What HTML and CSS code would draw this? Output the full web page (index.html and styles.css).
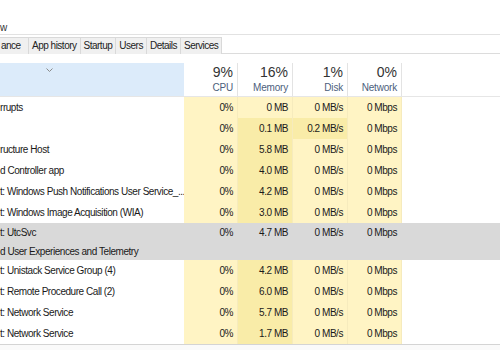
FILE: index.html
```html
<!DOCTYPE html>
<html lang="en">

<head>
    <meta charset="UTF-8">
    <title>Task Manager</title>
    <link rel="stylesheet" href="styles.css">
</head>

<body>
    <div class="window">
        <!-- Menu bar (clipped) -->
        <div class="menu"><span>w</span></div>

        <!-- Tabs -->
        <div class="tabs">
            <div class="tab first">ance</div>
            <div class="tab">App history</div>
            <div class="tab">Startup</div>
            <div class="tab">Users</div>
            <div class="tab">Details</div>
            <div class="tab">Services</div>
        </div>

        <!-- Column headers -->
        <div class="grid head">
            <div class="name-head">
                <svg class="sort" width="7" height="4" viewBox="0 0 7 4">
                    <path d="M0.5 0.5 L3.5 3.5 L6.5 0.5" fill="none" stroke="#8a8a8a" stroke-width="1"/>
                </svg>
            </div>
            <div class="col-head"><span class="pct">9%</span><span class="lbl">CPU</span></div>
            <div class="col-head"><span class="pct">16%</span><span class="lbl">Memory</span></div>
            <div class="col-head"><span class="pct">1%</span><span class="lbl">Disk</span></div>
            <div class="col-head"><span class="pct">0%</span><span class="lbl">Network</span></div>
            <div class="rest"></div>
        </div>

        <!-- Process rows -->
        <div class="rows">
            <div class="grid row">
                <div class="name">rrupts</div>
                <div class="cell">0%</div>
                <div class="cell">0 MB</div>
                <div class="cell">0 MB/s</div>
                <div class="cell">0 Mbps</div>
                <div class="rest"></div>
            </div>
            <div class="grid row">
                <div class="name"></div>
                <div class="cell">0%</div>
                <div class="cell hot">0.1 MB</div>
                <div class="cell hot">0.2 MB/s</div>
                <div class="cell">0 Mbps</div>
                <div class="rest"></div>
            </div>
            <div class="grid row">
                <div class="name">ructure Host</div>
                <div class="cell">0%</div>
                <div class="cell hot">5.8 MB</div>
                <div class="cell">0 MB/s</div>
                <div class="cell">0 Mbps</div>
                <div class="rest"></div>
            </div>
            <div class="grid row">
                <div class="name">d Controller app</div>
                <div class="cell">0%</div>
                <div class="cell hot">4.0 MB</div>
                <div class="cell">0 MB/s</div>
                <div class="cell">0 Mbps</div>
                <div class="rest"></div>
            </div>
            <div class="grid row">
                <div class="name">t: Windows Push Notifications User Service_...</div>
                <div class="cell">0%</div>
                <div class="cell hot">4.2 MB</div>
                <div class="cell">0 MB/s</div>
                <div class="cell">0 Mbps</div>
                <div class="rest"></div>
            </div>
            <div class="grid row">
                <div class="name">t: Windows Image Acquisition (WIA)</div>
                <div class="cell">0%</div>
                <div class="cell hot">3.0 MB</div>
                <div class="cell">0 MB/s</div>
                <div class="cell">0 Mbps</div>
                <div class="rest"></div>
            </div>

            <!-- Selected group -->
            <div class="group">
                <div class="grid row sub">
                    <div class="name">t: UtcSvc</div>
                    <div class="cell">0%</div>
                    <div class="cell">4.7 MB</div>
                    <div class="cell">0 MB/s</div>
                    <div class="cell">0 Mbps</div>
                    <div class="rest"></div>
                </div>
                <div class="grid row sub">
                    <div class="name">d User Experiences and Telemetry</div>
                    <div class="cell"></div>
                    <div class="cell"></div>
                    <div class="cell"></div>
                    <div class="cell"></div>
                    <div class="rest"></div>
                </div>
            </div>

            <div class="grid row">
                <div class="name">t: Unistack Service Group (4)</div>
                <div class="cell">0%</div>
                <div class="cell hot">4.2 MB</div>
                <div class="cell">0 MB/s</div>
                <div class="cell">0 Mbps</div>
                <div class="rest"></div>
            </div>
            <div class="grid row">
                <div class="name">t: Remote Procedure Call (2)</div>
                <div class="cell">0%</div>
                <div class="cell hot">6.0 MB</div>
                <div class="cell">0 MB/s</div>
                <div class="cell">0 Mbps</div>
                <div class="rest"></div>
            </div>
            <div class="grid row">
                <div class="name">t: Network Service</div>
                <div class="cell">0%</div>
                <div class="cell hot">5.7 MB</div>
                <div class="cell">0 MB/s</div>
                <div class="cell">0 Mbps</div>
                <div class="rest"></div>
            </div>
            <div class="grid row">
                <div class="name">t: Network Service</div>
                <div class="cell">0%</div>
                <div class="cell hot">1.7 MB</div>
                <div class="cell">0 MB/s</div>
                <div class="cell">0 Mbps</div>
                <div class="rest"></div>
            </div>
        </div>

        <div class="footer"></div>
    </div>
</body>

</html>
```

FILE: styles.css
```css
body {
    margin: 0;
    padding: 0;
    background: #fff;
    font-family: 'Liberation Sans', Arial, sans-serif;
    color: #222;
    overflow: hidden;
}

.window {
    width: 500px;
    height: 350px;
    display: flex;
    flex-direction: column;
    overflow: hidden;
}

.menu {
    height: 34px;
    display: flex;
    align-items: flex-end;
    font-size: 10px;
    color: #333;
    border-bottom: 1px solid #e2e2e2;
}

.menu span {
    padding-bottom: 1px;
}

.tabs {
    display: flex;
    height: 19px;
    padding-top: 2px;
    box-sizing: border-box;
    border-bottom: 1px solid #dcdcdc;
}

.tab {
    height: 16px;
    line-height: 16px;
    padding: 0 3px;
    font-size: 10px;
    letter-spacing: -0.5px;
    color: #222;
    background: #f0f0f0;
    border: 1px solid #d9d9d9;
    border-left: none;
    border-bottom: none;
}

.tab.first {
    padding-left: 1px;
    width: 24px;
}

/* Shared column layout */
.grid {
    display: grid;
    grid-template-columns: 184px 54px 55px 55px 54px 1fr;
}

.head {
    margin-top: 9px;
    height: 33px;
    border-bottom: 1px solid #e6e6e6;
}

.name-head {
    background: #dcebfa;
    display: flex;
    justify-content: center;
    padding-left: 3px;
    padding-right: 89px;
    padding-top: 5px;
    box-sizing: border-box;
}

.sort {
    display: block;
}

.col-head {
    display: flex;
    flex-direction: column;
    align-items: flex-end;
    padding-right: 4px;
    border-right: 1px solid #e3e3e3;
}

.pct {
    font-size: 14px;
    line-height: 18px;
    color: #333;
}

.lbl {
    font-size: 10px;
    line-height: 13px;
    letter-spacing: -0.2px;
    color: #4c5e7c;
}

.row {
    height: 21px;
    font-size: 10px;
    letter-spacing: -0.45px;
    line-height: 21px;
}

.name {
    white-space: nowrap;
    overflow: hidden;
    color: #1a1a1a;
}

.cell {
    background: #fff4c4;
    text-align: right;
    padding-right: 4px;
    color: #1a1a1a;
    border-right: 1px solid #f6ebbd;
}

.cell.hot {
    background: #f9eca8;
}

.group {
    background: #d9d9d9;
}

.group .row {
    height: 18.5px;
    line-height: 19px;
}

.group .cell {
    background: #d9d9d9;
    border-right-color: #d9d9d9;
}

.footer {
    flex: 1;
    border-top: 1px solid #d4d4d4;
    background: #fafafa;
}
```
